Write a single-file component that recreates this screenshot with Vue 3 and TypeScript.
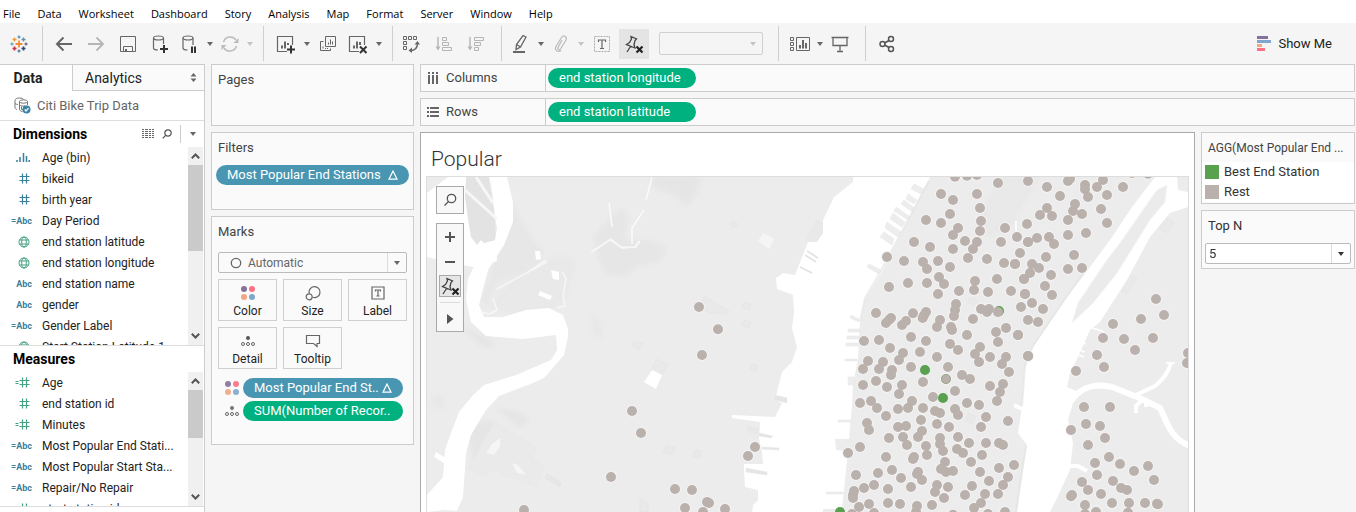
<script setup lang="ts">
import { ref } from 'vue'

type FieldKind = 'bins' | 'hash' | 'calcHash' | 'abc' | 'calcAbc' | 'globe'

interface Field {
  kind: FieldKind
  name: string
  measure?: boolean
}

interface Tile {
  x: number
  y: number
  dots: number[][]
}

const menus: string[] = ['File', 'Data', 'Worksheet', 'Dashboard', 'Story', 'Analysis', 'Map', 'Format', 'Server', 'Window', 'Help']

const dimensions: Field[] = [
  { kind: 'bins', name: 'Age (bin)' },
  { kind: 'hash', name: 'bikeid' },
  { kind: 'hash', name: 'birth year' },
  { kind: 'calcAbc', name: 'Day Period' },
  { kind: 'globe', name: 'end station latitude' },
  { kind: 'globe', name: 'end station longitude' },
  { kind: 'abc', name: 'end station name' },
  { kind: 'abc', name: 'gender' },
  { kind: 'calcAbc', name: 'Gender Label' },
  { kind: 'globe', name: 'Start Station Latitude 1' },
]

const measures: Field[] = [
  { kind: 'calcHash', name: 'Age', measure: true },
  { kind: 'hash', name: 'end station id', measure: true },
  { kind: 'calcHash', name: 'Minutes', measure: true },
  { kind: 'calcAbc', name: 'Most Popular End Stati...' },
  { kind: 'calcAbc', name: 'Most Popular Start Sta...' },
  { kind: 'calcAbc', name: 'Repair/No Repair' },
  { kind: 'hash', name: 'start station id', measure: true },
]

const panes = [
  { title: 'Dimensions', fields: dimensions, tools: true },
  { title: 'Measures', fields: measures, tools: false },
]

const markType = ref('Automatic')
const topN = ref('5')

/* Station positions, in thirds of a map unit from each tile's corner. */
const tiles: Tile[] = [
  {
    x: 416, y: 320,
    dots: [[648, 273], [675, 339], [585, 471], [324, 570]],
  },
  {
    x: 640, y: 170,
    dots: [[177, 411], [234, 478], [186, 555], [345, 831], [324, 858], [105, 957], [156, 960], [201, 996], [207, 999], [135, 1014], [189, 1026], [255, 1017], [624, 849]],
  },
  {
    x: 840, y: 170,
    dots: [
      [345, 20], [381, 17], [411, 15], [474, 39], [564, 33], [303, 72], [339, 90], [411, 72], [420, 114], [330, 132],
      [258, 150], [303, 159], [423, 153], [354, 174], [420, 183], [339, 195], [495, 174], [561, 162], [222, 216], [270, 231],
      [375, 213], [411, 216], [399, 237], [339, 237], [483, 216], [531, 201], [564, 216], [540, 249], [384, 264], [441, 267],
      [141, 261], [192, 273], [249, 276], [261, 297], [294, 273], [330, 291], [492, 279], [525, 282], [297, 321], [312, 342],
      [147, 351], [204, 339], [261, 339], [294, 372], [357, 363], [405, 333], [402, 360], [444, 366], [471, 327], [513, 363],
      [552, 327], [555, 372], [543, 411], [348, 402], [345, 420], [342, 438], [423, 417], [447, 417], [441, 426],
      [108, 429], [153, 444], [147, 450], [138, 459], [219, 430], [198, 453], [186, 465], [258, 426], [252, 436], [248, 444],
      [300, 450], [291, 471], [399, 447], [333, 471], [336, 480], [381, 495], [498, 474], [468, 486], [474, 516], [534, 495],
      [72, 513], [117, 510], [213, 501], [258, 513], [150, 534], [189, 549], [177, 570], [240, 546], [330, 522], [354, 540],
      [420, 531], [405, 552], [417, 576], [450, 561], [498, 561], [486, 582], [507, 606], [564, 558], [291, 561], [84, 573],
      [69, 597], [129, 576], [117, 597], [156, 600], [153, 615], [213, 591], [324, 591], [366, 615], [390, 627], [318, 627],
      [249, 636], [69, 645], [108, 633], [141, 651], [186, 645], [177, 672], [345, 663], [450, 648], [489, 642], [480, 666],
      [471, 693], [279, 681], [60, 699], [93, 693], [111, 714], [216, 693], [204, 714], [174, 717], [249, 714], [285, 723],
      [300, 729], [345, 717], [354, 735], [381, 699], [417, 705], [438, 741], [504, 753], [138, 738], [243, 750], [291, 762],
      [327, 771], [423, 771], [81, 759], [87, 780], [174, 771], [198, 768], [246, 783], [234, 801], [147, 804], [189, 801],
      [201, 825], [258, 828], [261, 855], [300, 804], [300, 822], [309, 843], [354, 801], [387, 819], [438, 819], [477, 819],
      [489, 825], [351, 837], [369, 849], [426, 855], [60, 831], [138, 861], [222, 861], [219, 867], [315, 876], [393, 876],
      [420, 906], [477, 894], [522, 885], [504, 921], [489, 945], [474, 972], [447, 933], [48, 915], [114, 909], [156, 900],
      [183, 924], [234, 906], [231, 912], [246, 930], [303, 897], [318, 906], [339, 903], [213, 951], [291, 945], [285, 966],
      [324, 951], [312, 984], [396, 948], [375, 975], [435, 972], [423, 999], [402, 1014], [72, 954], [102, 945], [144, 957],
      [42, 963], [39, 975], [39, 984], [57, 1011], [87, 1002], [144, 999], [180, 1002], [231, 1008], [276, 1005], [36, 1032],
      [102, 1029], [228, 1026], [339, 1034], [444, 1032], [495, 1026],
    ],
  },
  {
    x: 1010, y: 170,
    dots: [
      [174, 33], [180, 26], [279, 30], [366, 9], [414, 11], [111, 51], [225, 45], [225, 58], [234, 81], [261, 51],
      [339, 51], [150, 78], [291, 75], [195, 102], [189, 123], [216, 132], [273, 117], [111, 114], [90, 135], [126, 138],
      [174, 150], [291, 159], [228, 189], [174, 195], [81, 204], [117, 201], [132, 222], [54, 216], [192, 255], [108, 261],
      [66, 282], [87, 294], [60, 309], [42, 327], [174, 297], [216, 294], [123, 315], [105, 348], [126, 375], [66, 399],
      [99, 417], [54, 450], [84, 456], [24, 495], [54, 558], [15, 282], [45, 372], [438, 387], [462, 435], [393, 447],
      [309, 462], [279, 504], [342, 507], [429, 504], [375, 540], [261, 555], [282, 591], [198, 603], [534, 549], [531, 579],
      [222, 711], [300, 711], [228, 762], [270, 768], [183, 780], [285, 804], [234, 825], [297, 861], [255, 879], [330, 882],
      [414, 888], [372, 903], [261, 915], [432, 930], [309, 933], [216, 936], [234, 960], [333, 954], [351, 960], [273, 972],
      [186, 975], [183, 979], [225, 1005], [306, 999], [357, 999], [405, 999], [441, 1001], [444, 1003], [258, 1026], [225, 1032],
      [354, 1028],
    ],
  },
]

const bestDots: number[][] = [[925, 370], [943, 398], [840, 512]]
</script>

<template>
  <div class="app">
    <nav class="menubar" aria-label="Main menu">
      <button v-for="m in menus" :key="m" type="button">{{ m }}</button>
    </nav>

    <div class="toolbar" role="toolbar" aria-label="Tools">
      <button type="button" class="logo" aria-label="Start page">
        <svg width="18" height="18" viewBox="0 0 18 18" fill="none" stroke-width="1.4">
          <path stroke="#eb8f3a" stroke-width="1.8" d="M9 5.5v7M5.5 9h7" />
          <path stroke="#59a0b8" d="M9 .5v3M7.5 2h3" /><path stroke="#5b7ea5" d="M9 14.5v3M7.5 16h3" />
          <path stroke="#73a1b5" d="M.5 9h3M2 7.5v3" /><path stroke="#6d6c8e" d="M14.500 9h3M16 7.500v3" />
          <path stroke="#eb9a3a" d="M4.500 2.500v4M2.500 4.500h4" /><path stroke="#5d93aa" d="M13.500 2.500v4M11.500 4.500h4" />
          <path stroke="#c8304c" stroke-width="1.700" d="M4.500 11.500v4M2.500 13.500h4" /><path stroke="#29497f" stroke-width="1.700" d="M13.500 11.500v4M11.500 13.500h4" />
        </svg>
      </button>
      <span class="sep"></span>
      <button type="button" class="tool wide" aria-label="Undo">
        <svg width="18" height="18" viewBox="0 0 18 18" fill="none" stroke="#666" stroke-width="2"><path d="M17 9H2M8.500 2.500 2 9l6.500 6.500" /></svg>
      </button>
      <button type="button" class="tool wide" aria-label="Redo">
        <svg width="18" height="18" viewBox="0 0 18 18" fill="none" stroke="#b5b5b5" stroke-width="1.800"><path d="M1 9h15M9.500 2.500 16 9l-6.500 6.500" /></svg>
      </button>
      <button type="button" class="tool wide" aria-label="Save">
        <svg width="18" height="18" viewBox="0 0 18 18" fill="none" stroke="#666"><path d="M1.500 1.500h15v15h-15zM4.500 16.500v-5h9v5" /><path fill="#666" d="M6 14h2v2.500H6z" stroke="none" /></svg>
      </button>
      <button type="button" class="tool wide" aria-label="New data source">
        <svg width="20" height="20" viewBox="0 0 20 20" fill="none" stroke="#666" stroke-width="1.200"><ellipse cx="8.500" cy="4" rx="5" ry="2" /><path d="M3.500 4v10c0 1.200 2 2 4.500 2M13.500 4v6" /><path stroke="#333" stroke-width="2" d="M14 11v8M10 15h8" /></svg>
      </button>
      <button type="button" class="tool" aria-label="Pause updates">
        <svg width="20" height="20" viewBox="0 0 20 20" fill="none" stroke="#666" stroke-width="1.200"><ellipse cx="9" cy="4" rx="5" ry="2" /><path d="M4 4v10c0 1.200 2 2 4.500 2M14 4v7" /><path stroke="#333" stroke-width="2" d="M13 12.500v6.500M16 12.500v6.500" /></svg>
      </button>
      <button type="button" class="caret" aria-label="Update options"></button>
      <button type="button" class="tool narrow" aria-label="Run update">
        <svg width="18" height="18" viewBox="0 0 18 18" fill="none" stroke="#bbb" stroke-width="1.500"><path d="M2.500 7A7 7 0 0 1 15 5M15.500 11A7 7 0 0 1 3 13" /><path fill="#bbb" stroke="none" d="M17.500 3v5h-5zM.5 15v-5h5z" /></svg>
      </button>
      <button type="button" class="caret dim" aria-label="Run options"></button>
      <span class="sep"></span>
      <button type="button" class="tool gap" aria-label="New worksheet">
        <svg width="20" height="20" viewBox="0 0 20 20" fill="none" stroke="#666" stroke-width="1.200"><path d="M11 17.500H1.500v-15h15V11" /><path stroke-width="2" d="M6 14.500v-3M9 14.500v-7M12 11V9" /><path stroke="#333" stroke-width="2" d="M15 11.500v8M11 15.500h8" /></svg>
      </button>
      <button type="button" class="caret" aria-label="New sheet options"></button>
      <button type="button" class="tool" aria-label="Duplicate sheet">
        <svg width="18" height="18" viewBox="0 0 18 18" fill="none" stroke="#666"><path d="M6.500 1.500h10v10h-10zM4.500 6.500h-3v9h10v-2M9.500 9.500v-2M11.500 9.500v-5M13.500 9.500v-3M4 13.500v-2M6.500 14v-1M8.500 14v-1" /></svg>
      </button>
      <button type="button" class="tool gap" aria-label="Clear sheet">
        <svg width="20" height="20" viewBox="0 0 20 20" fill="none" stroke="#666" stroke-width="1.200"><path d="M11 17.500H1.500v-15h15V11" /><path stroke-width="2" d="M6 14.500v-3M9 14.500v-7M12 11V8" /><path stroke="#333" stroke-width="2" d="m12 12.500 6.500 6.500m0-6.500L12 19" /></svg>
      </button>
      <button type="button" class="caret" aria-label="Clear options"></button>
      <span class="sep"></span>
      <button type="button" class="tool" aria-label="Swap rows and columns">
        <svg width="18" height="18" viewBox="0 0 18 18" fill="none" stroke="#666"><path d="M1.500 1.500h3v3h-3zM6.500 1.500h3v3h-3zM11.500 1.500h3v3h-3zM1.500 6.500h3v3h-3zM1.500 11.500h3v3h-3z" /><path stroke-width="1.400" d="M15.500 8c0 5-3 7.500-7 7.500" /><path fill="#666" stroke="none" d="M12.500 9.500 15.500 6l2.500 3.500zM10 12.500v5.500L6.500 15.500z" /></svg>
      </button>
      <button type="button" class="tool wide gap" aria-label="Sort ascending">
        <svg width="18" height="18" viewBox="0 0 18 18" fill="none" stroke="#b5b5b5"><path stroke-width="1.400" d="M3 2v12" /><path fill="#b5b5b5" stroke="none" d="M.5 11.500h5L3 15.500z" /><path d="M7.500 2.500h4v3h-4zM7.500 7.500h6v3h-6zM7.500 12.500h9v3h-9z" /></svg>
      </button>
      <button type="button" class="tool wide" aria-label="Sort descending">
        <svg width="18" height="18" viewBox="0 0 18 18" fill="none" stroke="#b5b5b5"><path stroke-width="1.400" d="M3 2v12" /><path fill="#b5b5b5" stroke="none" d="M.5 11.500h5L3 15.500z" /><path d="M7.500 2.500h9v3h-9zM7.500 7.500h6v3h-6zM7.500 12.500h4v3h-4z" /></svg>
      </button>
      <span class="sep gap"></span>
      <button type="button" class="tool" aria-label="Highlight">
        <svg width="18" height="20" viewBox="0 0 18 20" fill="none" stroke="#666" stroke-width="1.300"><path d="M12 1.500 15 3 9.500 13 5 15.500l.5-5zM5.500 10.500 9.500 13" /><path stroke-width="2" d="M2 18h12" /></svg>
      </button>
      <button type="button" class="caret" aria-label="Highlight options"></button>
      <button type="button" class="tool narrow" aria-label="Group members">
        <svg width="18" height="20" viewBox="0 0 18 20" fill="none" stroke="#bbb" stroke-width="1.200"><path d="m10 6-4 7.500c-.8 2 1.500 3 2.500 1.500L14 6c1.500-3.500-2.500-5.500-4.500-2.500l-5.500 9c-2 4 2.500 6 5 4" /></svg>
      </button>
      <button type="button" class="caret dim" aria-label="Group options"></button>
      <button type="button" class="tool" aria-label="Show mark labels">
        <svg width="18" height="18" viewBox="0 0 18 18" fill="none" stroke="#aaa"><rect x="1.500" y="1.500" width="15" height="15" stroke-dasharray="2 1" /><path stroke="#666" stroke-width="1.200" d="M5.500 7V5h7v2M9 5v8M7 13.500h4" /></svg>
      </button>
      <button type="button" class="tool pin gap" aria-label="Fix axes">
        <svg width="20" height="20" viewBox="0 0 20 20" fill="none" stroke="#444" stroke-width="1.300"><path d="M7 2.500 12.500 5 11 6.500l-1 4 1 3.500-8.500-3.500 3-2 2-3.500zM6.500 12.500 3 18" /><path stroke="#222" stroke-width="2.200" d="m12.500 12.500 6 6m0-6-6 6" /></svg>
      </button>
      <span class="fit">
        <select aria-label="Fit" disabled></select>
      </span>
      <span class="sep"></span>
      <button type="button" class="tool narrow gap" aria-label="Show cards">
        <svg width="20" height="18" viewBox="0 0 20 18" fill="none" stroke="#666"><path d="M.5 2.500h3v3h-3zM.5 7.500h3v3h-3zM.5 12.500h3v3h-3zM6.500 2.500h13v13h-13z" /><path stroke-width="2" d="M10 13.500V10M13 13.500V5M16 13.500V8" /></svg>
      </button>
      <button type="button" class="caret" aria-label="Card options"></button>
      <button type="button" class="tool narrow" aria-label="Presentation mode">
        <svg width="18" height="18" viewBox="0 0 18 18" fill="none" stroke="#666" stroke-width="1.300"><path d="M.5 2.500h17M2 3v7.500h14V3M9 10.500V16M6 16.500h6" /></svg>
      </button>
      <span class="sep gap2"></span>
      <button type="button" class="tool wide" aria-label="Share">
        <svg width="18" height="18" viewBox="0 0 18 18" fill="none" stroke="#555" stroke-width="1.500"><circle cx="4.500" cy="9" r="2.500" /><circle cx="13" cy="4" r="2.500" /><circle cx="13" cy="14" r="2.500" /><path d="m6.500 8 4.500-2.500M6.500 10l4.500 2.500" /></svg>
      </button>
      <button type="button" class="showme">
        <svg width="14" height="15" viewBox="0 0 14 15"><path fill="#85719a" d="M0 0h11v3H0z" /><path fill="#7fa6cd" d="M0 4h14v3H0z" /><path fill="#f3a683" d="M0 8h5v3H0z" /><path fill="#fc7183" d="M0 12h8v3H0z" /></svg>
        Show Me
      </button>
    </div>

    <div class="workspace">
      <aside class="data">
        <div class="tabs">
          <button type="button" class="tab active">Data</button>
          <button type="button" class="tab rest">
            Analytics
            <svg width="7" height="9" viewBox="0 0 7 9" fill="#666"><path d="M3.500 0 6.500 3.500h-6zM3.500 9 .5 5.500h6z" /></svg>
          </button>
        </div>
        <button type="button" class="source">
          <svg width="17" height="17" viewBox="0 0 17 17" fill="none" stroke="#777"><path d="M1 3.500C1 2 3 1 5.500 1S9 1.500 9.500 2.500M1 3.500v7c0 1 .8 1.500 2 2M1 6.500c1 .7 2 1 3 1" /><ellipse cx="9.500" cy="4.500" rx="4" ry="1.700" /><path d="M5.500 4.500v8c0 1 1 1.700 3 2M13.500 4.500V8M5.500 8c1 1 4 1.500 6 .7M7.500 9.500v3h3" /><circle cx="12.500" cy="12.500" r="4" fill="#3b83a8" stroke="none" /><path stroke="#fff" stroke-width="1.200" d="m10.700 12.500 1.300 1.500 2.500-2.800" /></svg>
          Citi Bike Trip Data
        </button>

        <section v-for="p in panes" :key="p.title" class="pane" :class="{ main: p.tools }">
          <header>
            <h2>{{ p.title }}</h2>
            <template v-if="p.tools">
              <button type="button" class="mini" aria-label="View as list">
                <svg width="12" height="10" viewBox="0 0 12 10" stroke="#666"><path stroke-dasharray="2 1 3 1 2 1 2 1" d="M0 .5h12M0 2.500h12M0 4.500h12M0 6.500h12M0 8.500h12" /></svg>
              </button>
              <button type="button" class="mini" aria-label="Find field">
                <svg width="10" height="10" viewBox="0 0 10 10" fill="none" stroke="#555" stroke-width="1.200"><circle cx="6" cy="4" r="3.200" /><path d="M3.700 6.300.7 9.300" /></svg>
              </button>
              <span class="rule"></span>
              <button type="button" class="caret head" aria-label="Pane menu"></button>
            </template>
          </header>
          <div class="listwrap">
            <ul>
              <li v-for="f in p.fields" :key="f.name" :class="{ green: f.measure || f.kind === 'globe' }">
                <span class="kind">
                  <svg v-if="f.kind === 'bins'" width="14" height="11" viewBox="0 0 14 11" stroke="currentColor"><path stroke-width="1.500" d="M1 10V8M4 10V5M7.500 10V1M10.500 10V4M13.200 10V8" /></svg>
                  <svg v-else-if="f.kind === 'hash'" width="11" height="11" viewBox="0 0 11 11" stroke="currentColor" stroke-width="1.200"><path d="M3.500.5v10M7.500.5v10M.5 3.500h10M.5 7.500h10" /></svg>
                  <svg v-else-if="f.kind === 'calcHash'" width="15" height="11" viewBox="0 0 15 11" stroke="currentColor" stroke-width="1.200"><path d="M7.500.5v10M11.500.5v10M4.500 3.500h10M4.500 7.500h10M.5 4.500h3M.5 6.500h3" /></svg>
                  <svg v-else-if="f.kind === 'globe'" width="12" height="12" viewBox="0 0 12 12" fill="none" stroke="currentColor"><circle cx="6" cy="6" r="5" /><ellipse cx="6" cy="6" rx="2.300" ry="5" /><path d="M1.500 4h9M1.500 8h9" /></svg>
                  <b v-else>{{ f.kind === 'calcAbc' ? '=Abc' : 'Abc' }}</b>
                </span>
                <span>{{ f.name }}</span>
              </li>
            </ul>
            <div class="scroll">
              <svg width="9" height="6" viewBox="0 0 9 6" fill="none" stroke="#555" stroke-width="2"><path d="m.8 5.200 3.700-3.700 3.700 3.700" /></svg>
              <span class="thumb"></span>
              <svg width="9" height="6" viewBox="0 0 9 6" fill="none" stroke="#555" stroke-width="2"><path d="m.8.8 3.700 3.700L8.200.8" /></svg>
            </div>
          </div>
        </section>
      </aside>

      <div class="cards">
        <section class="card pages"><h3>Pages</h3></section>
        <section class="card filters">
          <h3>Filters</h3>
          <button type="button" class="pill blue">
            <span>Most Popular End Stations</span>
            <svg width="10" height="10" viewBox="0 0 10 10" fill="none" stroke="#fff" stroke-width="1.200"><path d="M5 1 9 9.200H1z" /></svg>
          </button>
        </section>
        <section class="card marks">
          <h3>Marks</h3>
          <div class="combo">
            <svg width="12" height="12" viewBox="0 0 12 12" fill="none" stroke="#666" stroke-width="1.300"><circle cx="6" cy="6" r="4.700" /></svg>
            <select v-model="markType" aria-label="Mark type"><option>Automatic</option></select>
            <span class="drop"></span>
          </div>
          <div class="shelves">
            <button type="button">
              <svg width="16" height="16" viewBox="0 0 16 16"><circle cx="4" cy="4" r="3" fill="#85719a" /><circle cx="12" cy="4" r="3" fill="#fc7183" /><circle cx="4" cy="12" r="3" fill="#f3a683" /><circle cx="12" cy="12" r="3" fill="#7fa6cd" /></svg>
              Color
            </button>
            <button type="button">
              <svg width="16" height="16" viewBox="0 0 16 16" fill="none" stroke="#666" stroke-width="1.200"><path d="M4.200 8.500a5.500 5.500 0 1 1 3.500 3.800" /><circle cx="4.200" cy="11.800" r="3" /></svg>
              Size
            </button>
            <button type="button">
              <svg width="16" height="16" viewBox="0 0 16 16" fill="none" stroke="#666" stroke-width="1.200"><path d="M2 2h12v12H2zM5.500 6.500V5h5v1.500M8 5v6M6.500 11h3" /></svg>
              Label
            </button>
            <button type="button">
              <svg width="16" height="16" viewBox="0 0 16 16" fill="none" stroke="#666"><circle cx="8" cy="5" r="2" fill="#555" stroke="none" /><circle cx="3" cy="11" r="1.500" /><circle cx="8" cy="11" r="1.500" /><circle cx="13" cy="11" r="1.500" /></svg>
              Detail
            </button>
            <button type="button">
              <svg width="16" height="16" viewBox="0 0 16 16" fill="none" stroke="#666" stroke-width="1.200"><path d="M1.500 2.500h13v8H12v3l-3.500-3h-7z" /></svg>
              Tooltip
            </button>
          </div>
          <div class="encodings">
            <div class="enc">
              <svg width="16" height="16" viewBox="0 0 16 16" opacity=".9"><circle cx="4" cy="4" r="3" fill="#85719a" /><circle cx="12" cy="4" r="3" fill="#fc7183" /><circle cx="4" cy="12" r="3" fill="#f3a683" /><circle cx="12" cy="12" r="3" fill="#7fa6cd" /></svg>
              <button type="button" class="pill blue">
                <span>Most Popular End St..</span>
                <svg width="10" height="10" viewBox="0 0 10 10" fill="none" stroke="#fff" stroke-width="1.200"><path d="M5 1 9 9.200H1z" /></svg>
              </button>
            </div>
            <div class="enc">
              <svg width="16" height="16" viewBox="0 0 16 16" fill="none" stroke="#666"><circle cx="8" cy="5" r="2" fill="#777" stroke="none" /><circle cx="3" cy="11" r="1.500" /><circle cx="8" cy="11" r="1.500" /><circle cx="13" cy="11" r="1.500" /></svg>
              <button type="button" class="pill"><span>SUM(Number of Recor..</span></button>
            </div>
          </div>
        </section>
      </div>

      <main class="canvas">
        <div class="shelf">
          <div class="label">
            <svg width="12" height="12" viewBox="0 0 12 12" stroke="#666" stroke-width="2"><path d="M2 0v2M6 0v2M10 0v2M2 3v9M6 3v9M10 3v9" /></svg>
            Columns
          </div>
          <button type="button" class="pill">end station longitude</button>
        </div>
        <div class="shelf">
          <div class="label">
            <svg width="12" height="12" viewBox="0 0 12 12" stroke="#666" stroke-width="2"><path d="M0 2h2M0 6h2M0 10h2M3 2h9M3 6h9M3 10h9" /></svg>
            Rows
          </div>
          <button type="button" class="pill">end station latitude</button>
        </div>

        <div class="lower">
          <section class="view">
            <h1>Popular</h1>
            <div class="map">
              <svg class="geo" viewBox="427 177 762 335" preserveAspectRatio="xMinYMin slice" role="img" aria-label="Map of end stations">
                <defs>
                  <filter id="soft" x="-20%" y="-20%" width="140%" height="140%"><feGaussianBlur stdDeviation="2" /></filter>
                </defs>
                <rect x="427" y="177" width="762" height="335" fill="#ececec" />
                <g fill="#e5e5e5" filter="url(#soft)">
                  <path d="M650 177h52l-6 18-9 11-14-12-18-6z" />
                  <path d="M612 216l12-8 4 14-4 18 28 0 14 8-6 14-22 4-12 10-20-2-8-18-4-20z" opacity=".8" />
                  <path d="M510 200l22 38 12 14-8 12-40 20-10 24-4-10 16-50z" opacity=".6" />
                  <path d="M520 270l40-14 16 6-10 34-12 14-40 4-24-8z" opacity=".5" />
                  <path d="M470 424l24-4 6 20-6 18-20 6-4-20zM494 408l24 4 12 6-8 10z" />
                  <path d="M592 314l8 6 2 18-8-2zM432 396l12 0 0 12-10-2z" opacity=".7" />
                  <path d="M1000 177h40l-30 50-22 10-8-20z" opacity=".5" />
                  <path d="M460 325l30 14 6 8-14 0z" />
                </g>
                <g fill="#e9e9e9" stroke="#e2e2e2" stroke-width=".6">
                  <path d="M494 422l42 25-4 12 12 8-8 20-18-8-18-4-2-8-12 8-18-6z" fill="#eaeaea" stroke="#e6e6e6" />
                  <path d="M704 296l25 15-4 4-10-3-3 2-11-6zM744 302l7 2-2 6-7-2zM744 320l7 2-2 6-7-3zM657 359l11 6-7 11-10-6zM732 221l6 3-4 4-5-4zM666 446l9 1-3 8-9-2zM694 450l7 1-1 7-7-1zM752 364l6 2-2 5-6-2zM748 427l12 2-2 4-10-1z" />
                  <path d="M817 220l6 3-1 12-5 8-10-4zM633 342l11 1-5 7-6-4zM970 297l8 3-4 5-7-3zM968 413l8 3-4 8-6-4zM1126 272l11 7-11 15-8-6zM1162 216l12 6-6 11-9-4zM640 499l8 4 0 9h-8z" />
                  <path d="M547 474l14 8-1 5-15-9z" fill="#e4e7e5" />
                </g>
                <g fill="#fff">
                  <path d="M448 177h43l4 60 2 24-20 7-50-11v-64z" />
                  <path fill="#e3e3e3" d="M466 177h23l5 28 2 35-12 3-3-3-4 5-6-8-3-18-3-22z" />
                  <path d="M491 177h16l6 25v20l-9 23-16 25-5 19-4 16 5 12 19 0 23-7 23-2 14 7 5 14v8l-4 18-20 23-11 5-34 13-13 14-15 25-5 18-3 44-6 14-13-1-17 2v-17l16-18 2-27 6-17 8-21 14-17 11-10 32-10 35-15 6-10-1-15-33 4-37-3-15-14-5-22 2-21 8-17 18-17 3-16-4-27z" />
                  <path d="M436 452l10 6-2 5-10-6zM535 251l5 0 1 8-5 1zM540 291l12 5-2 4-12-5zM551 270l8 2 0 8-6-1z" />
                  <path d="M652 370l10 5-6 14-12-7z" />
                  <path fill="#f3f6f5" d="M763 233l11 6-5 10-11-8zM492 444l8-6 0 8-6 9-8-2zM512 463l6 2 8 10-9-2z" />
                </g>
                <g fill="none" stroke="#fff" stroke-width="1.500">
                  <path stroke="#f7f7f7" stroke-width="3" d="M476 177l17 26M464 189l33 30" />
                  <path d="M652 177l-6 23M644 210l-12 18 0 16M609 203l3 24M592 252l18-12 12 8 14-1 4-6M528 272l18-12" stroke-opacity=".8" />
                  <path stroke="#f5f5f5" d="M591 252l20-13 10 8 14 0 4-6M497 289l50-27" />
                  <path stroke="#f7f7f7" d="M562 272l4 6-3 18 2 10-8 2M481 312l8 2 8-4-4-12" />
                </g>
                <path fill="#fff" d="M930 177h-77v5l-19 15-11 23v13l-6 9-9 0-13 33-12-2-7 5 1 11 16 6 1 18-2 15 5 19-5 15-10 10-7 28 7 3-7 14-43-2v3l28 4-1 17 3 13 1 12h-19v6l1 17 13 3v10l-5 5-1 9h71v-5l19 0 6-58-12-1-1-11 14 0 3-34 1-20 5-26 2-37 5-23 15-24z" />
                <g fill="#ededed" stroke="#e6e6e6" stroke-width=".5">
                  <path d="M807 251l11 7M805 255l11 7M800 267l12 6" stroke-width="1.500" stroke="#e2e2e2" />
                  <path d="M775 395l12 3 0 5-12-3zM746 468l21 4 0 3-21-3zM759 433l14 3-2 2-12-2zM762 447l17 1 0 2-17-1z" fill="#e4e6e6" />
                  <path d="M914 184l10 5-3 5-10-5zM908 194l9 6-3 4-8-5zM904 200l12 9-2 4-13-9zM896 207l14 10-2 3-14-9zM893 213l12 9-3 5-12-8zM887 222l14 10-3 5-13-9zM884 232l10 7-2 6-12-8zM869 264l12 6-2 4-12-7z" />
                  <path d="M851 315l8 4v3l-9-4zM848 329h12v3h-12zM847 336h12v3h-12zM846 343h13v3h-13zM845 359h12v2h-12zM848 377h6v8h-6zM838 420h13v2h-13zM826 492h17v2h-17z" />
                </g>
                <path fill="#fff" d="M1155 177l-23 30-22 33-20 27-23 30-34 50-8 20-3 40-4 26 9 12-4 25-6 42h33l7-14 13-28 3-27-5-23 5-17 8-10-14-6 3-14 8-16 12-27 10-8 27-42 23-43 20-24 18-6v-15l-10-2-1-13z" />
                <path fill="#ebebeb" stroke="#f5f5f5" d="M1167 185l-10 5-37 53-13 17-29 43-6 20 21-20 24-30 33-53 15-18z" />
                <g fill="none" stroke="#fff">
                  <path stroke-width="6" d="M1070 402C1082 384 1100 384 1112 387L1142 399 1160 408C1168 424 1170 438 1190 446" />
                  <path stroke-width="4" d="M1136 395L1155 386Q1168 376 1171 362M1144 398l-8 8v7M1146 400l0 7" />
                  <path stroke-width="4" d="M1070 466l8 0 9 5M1014 405l8 4" />
                  <path stroke-width="1.500" d="M1080 350l5 2M1078 355l6 2M1082 342l4 2M1092 328l10 3 4 3M1166 363h9M1016 221v10" />
                </g>
                <path fill="none" stroke="#e2e2e2" stroke-width="2" opacity=".6" d="M1087 268l-20 28-34 50-8 20-3 40M1026 446l-4 25-6 41M929 181l-50 93-14 24-5 23" />
                <g fill="#f5f5f5" opacity=".8">
                  <g v-for="t in tiles" :key="`halo${t.x}`">
                    <circle v-for="(d, i) in t.dots" :key="i" :cx="t.x + d[0] / 3" :cy="t.y + d[1] / 3" r="6" />
                  </g>
                </g>
                <circle cx="999" cy="311" r="5" fill="#59a14f" />
                <circle cx="998" cy="312" r="5" fill="#bab0ac" />
                <g fill="#bab0ac">
                  <g v-for="t in tiles" :key="t.x">
                    <circle v-for="(d, i) in t.dots" :key="i" :cx="t.x + d[0] / 3" :cy="t.y + d[1] / 3" r="5" />
                  </g>
                </g>
                <circle cx="946" cy="379" r="4.500" fill="none" stroke="#9aaa8e" />
                <circle v-for="(d, i) in bestDots" :key="i" :cx="d[0]" :cy="d[1]" r="5" fill="#59a14f" />
              </svg>
              <div class="mapbar">
                <button type="button" class="search" aria-label="Search map">
                  <svg width="14" height="14" viewBox="0 0 14 14" fill="none" stroke="#555" stroke-width="1.300"><circle cx="8.500" cy="5.500" r="4.200" /><path d="M5.500 8.500 1.500 12.500" /></svg>
                </button>
                <div class="zoomer">
                  <button type="button" aria-label="Zoom in"><svg width="12" height="12" viewBox="0 0 12 12" stroke="#555" stroke-width="2"><path d="M6 1v10M1 6h10" /></svg></button>
                  <button type="button" aria-label="Zoom out"><svg width="12" height="12" viewBox="0 0 12 12" stroke="#555" stroke-width="2"><path d="M1 6h10" /></svg></button>
                  <button type="button" class="on" aria-label="Reset axes">
                    <svg width="20" height="20" viewBox="0 0 20 20" fill="none" stroke="#444" stroke-width="1.300"><path d="M7 2.500 12.500 5 11 6.500l-1 4 1 3.500-8.500-3.500 3-2 2-3.500zM6.500 12.500 3 18" /><path stroke="#222" stroke-width="2.200" d="m12.500 12.500 6 6m0-6-6 6" /></svg>
                  </button>
                  <hr>
                  <button type="button" aria-label="More tools"><svg width="7" height="10" viewBox="0 0 7 10" fill="#555"><path d="M0 0l6.500 5L0 10z" /></svg></button>
                </div>
              </div>
            </div>
          </section>

          <div class="side">
            <section class="card legend">
              <h3>AGG(Most Popular End ...</h3>
              <ul>
                <li><i class="best"></i>Best End Station</li>
                <li><i></i>Rest</li>
              </ul>
            </section>
            <section class="card param">
              <label for="topn">Top N</label>
              <div class="combo">
                <select id="topn" v-model="topN"><option>5</option><option>10</option></select>
                <span class="drop"></span>
              </div>
            </section>
          </div>
        </div>
      </main>
    </div>
  </div>
</template>

<style>
body {
  margin: 0;
}
</style>

<style scoped>
.app {
  display: flex;
  flex-direction: column;
  height: 100vh;
  overflow: hidden;
  background: #f5f5f5;
  color: #333;
  font: 13px/20px Roboto, "Liberation Sans", sans-serif;
}
.app * {
  box-sizing: border-box;
}
button,
select {
  margin: 0;
  padding: 0;
  border: 0;
  background: none;
  color: inherit;
  font: inherit;
}
select {
  appearance: none;
  outline: 0;
}
h1,
h2,
h3,
ul {
  margin: 0;
  padding: 0;
  list-style: none;
  font-weight: 400;
}
svg {
  flex: none;
  display: block;
}

.menubar {
  display: flex;
  flex: none;
  gap: 17px;
  height: 23px;
  padding: 4px 3px 0;
  background: #fff;
  color: #000;
  font: 11px/20px "Open Sans", "Noto Sans", sans-serif;
}

.toolbar {
  display: flex;
  flex: none;
  align-items: center;
  height: 41px;
}
.toolbar button {
  display: flex;
  flex: none;
  align-items: center;
  justify-content: center;
  height: 30px;
}
.toolbar .logo {
  width: 37px;
}
.toolbar .tool {
  width: 26px;
}
.toolbar .wide {
  width: 32px;
}
.toolbar .narrow {
  width: 24px;
}
.toolbar .gap {
  margin-left: 4px;
}
.toolbar .pin {
  width: 30px;
  background: #e4e4e4;
}
.sep {
  flex: none;
  width: 1px;
  height: 35px;
  margin: 0 5px;
  background: #cfcfcf;
}
.toolbar .sep.gap {
  margin-left: 9px;
}
.toolbar .sep.gap2 {
  margin-left: 13px;
}
.caret {
  width: 16px;
}
.caret::before,
.drop::before,
.fit::after {
  content: "";
  border: solid transparent;
  border-width: 4px 3px 0;
  border-top-color: #666;
}
.caret.dim::before,
.fit::after {
  border-top-color: #c4c4c4;
}
.fit {
  display: flex;
  align-items: center;
  width: 104px;
  height: 23px;
  margin: 0 10px;
  padding-right: 6px;
  border: 1px solid #d0d0d0;
  border-radius: 2px;
}
.fit select {
  flex: 1;
  min-width: 0;
}
.toolbar .showme {
  gap: 7px;
  margin-left: auto;
  margin-right: 24px;
  color: #222;
  font-size: 13px;
}

.workspace {
  display: flex;
  flex: 1;
  gap: 6px;
  min-height: 0;
  padding-right: 1px;
}
.data {
  display: flex;
  flex: none;
  flex-direction: column;
  width: 205px;
  padding-bottom: 5px;
  border: solid #ccc;
  border-width: 1px 1px 0 0;
  background: #fff;
  color: #222;
}
.tabs {
  display: flex;
  flex: none;
  height: 26px;
  font-size: 14px;
}
.tab.active {
  width: 72px;
  padding-right: 16px;
  font-weight: 700;
}
.tab.rest {
  display: flex;
  flex: 1;
  align-items: center;
  justify-content: space-between;
  padding: 0 7px 0 12px;
  border: solid #ccc;
  border-width: 0 0 1px 1px;
  background: #fafafa;
}
.source {
  display: flex;
  flex: none;
  align-items: center;
  gap: 6px;
  height: 30px;
  padding: 0 14px;
  border-bottom: 1px solid #ddd;
  color: #666;
}
.pane {
  display: flex;
  flex: 5 1 0;
  flex-direction: column;
  min-height: 0;
  border-bottom: 1px solid #ddd;
}
.pane.main {
  flex-grow: 7;
}
.pane header {
  display: flex;
  flex: none;
  align-items: center;
  height: 26px;
  padding-left: 13px;
}
h2 {
  flex: 1;
  color: #000;
  font-size: 14px;
  font-weight: 700;
}
.mini {
  margin-right: 8px;
}
.rule {
  width: 1px;
  height: 18px;
  background: #ccc;
}
.caret.head {
  display: flex;
  justify-content: center;
  width: 23px;
}
.listwrap {
  display: flex;
  flex: 1;
  min-height: 0;
  overflow: hidden;
}
.listwrap ul {
  flex: 1;
  min-width: 0;
}
.listwrap li {
  display: flex;
  align-items: center;
  height: 21px;
  white-space: nowrap;
  color: #3b7f9c;
  font-size: 12px;
}
.listwrap li.green {
  color: #45a381;
}
.listwrap li > span:last-child {
  color: #222;
}
.kind {
  display: flex;
  flex: none;
  justify-content: flex-end;
  width: 32px;
  margin-right: 10px;
}
.kind svg {
  margin-right: 2px;
}
.kind b {
  font-size: 9px;
}
.scroll {
  display: flex;
  flex: none;
  flex-direction: column;
  align-items: center;
  justify-content: space-between;
  width: 15px;
  margin-right: 1px;
  padding: 6px 0;
  background: #f0f0f0;
}
.thumb {
  width: 15px;
  height: 48px;
  margin: 6px 0 auto;
  background: #cacaca;
}
.main .thumb {
  height: 86px;
}

.cards {
  display: flex;
  flex: none;
  flex-direction: column;
  gap: 6px;
  width: 203px;
}
.card {
  flex: none;
  border: 1px solid #ccc;
  background: #fafafa;
}
.card h3 {
  padding: 5px 6px 0;
  color: #444;
  font-size: 13px;
}
.pages {
  height: 62px;
}
.filters {
  height: 78px;
}
.marks {
  padding-bottom: 23px;
}
.pill {
  display: flex;
  align-items: center;
  justify-content: space-between;
  height: 20px;
  padding: 0 11px;
  border-radius: 10px;
  background: #00b180;
  color: #fff;
  white-space: nowrap;
}
.pill.blue {
  background: #4996b2;
}
.filters .pill {
  width: 193px;
  margin: 7px 4px 0;
}
.combo {
  position: relative;
  display: flex;
  align-items: center;
  height: 21px;
  border: 1px solid #bbb;
  border-radius: 2px;
  background: #fff;
}
.combo select {
  flex: 1;
  min-width: 0;
  height: 19px;
}
.drop {
  position: absolute;
  top: 0;
  right: 0;
  bottom: 0;
  display: flex;
  align-items: center;
  justify-content: center;
  width: 19px;
  border-left: 1px solid #ddd;
  pointer-events: none;
}
.marks .combo {
  margin: 10px 6px 0;
  padding-left: 11px;
  gap: 6px;
  background: #fafafa;
  color: #666;
  font-size: 12px;
}
.shelves {
  display: grid;
  grid-template-columns: repeat(3, 1fr);
  gap: 6px;
  padding: 6px 6px 0;
}
.shelves button {
  display: flex;
  flex-direction: column;
  align-items: center;
  height: 42px;
  padding-top: 5px;
  border: 1px solid #d0d0d0;
  color: #222;
  font-size: 12px;
  line-height: 20px;
}
.encodings {
  display: grid;
  gap: 3px;
  padding: 9px 10px 0 12px;
}
.enc {
  display: flex;
  align-items: center;
  gap: 3px;
}
.enc .pill {
  flex: 1;
}

.canvas {
  display: flex;
  flex: 1;
  flex-direction: column;
  gap: 6px;
  min-width: 0;
}
.shelf {
  display: flex;
  flex: none;
  align-items: center;
  height: 28px;
  border: 1px solid #ccc;
  background: #fafafa;
}
.shelf .label {
  display: flex;
  align-items: center;
  gap: 7px;
  width: 125px;
  height: 26px;
  padding-left: 6px;
  border-right: 1px solid #ccc;
  color: #444;
}
.shelf .pill {
  width: 148px;
  margin-left: 2px;
}
.lower {
  display: flex;
  flex: 1;
  gap: 6px;
  min-height: 0;
}
.view {
  display: flex;
  flex: 1;
  flex-direction: column;
  min-width: 0;
  padding: 0 5px;
  border: solid #aaa;
  border-width: 1px 1px 0;
  background: #fff;
}
h1 {
  padding: 12px 5px 3px;
  color: #333;
  font-size: 21px;
  font-weight: 300;
  line-height: 28px;
}
.map {
  position: relative;
  flex: 1;
  min-height: 0;
  border: solid #ddd;
  border-width: 1px 1px 0;
  overflow: hidden;
}
.geo {
  width: 100%;
  height: 100%;
}
.mapbar {
  position: absolute;
  top: 9px;
  left: 9px;
  display: grid;
  gap: 9px;
  width: 28px;
}
.mapbar button {
  display: grid;
  place-items: center;
  width: 26px;
  height: 25px;
}
.search,
.zoomer {
  border: 1px solid #aaa;
  background: #f8f8f8;
}
.mapbar .search {
  width: 28px;
  height: 28px;
}
.mapbar .on {
  width: 22px;
  height: 22px;
  margin: 1px 2px 0;
  border: 1px solid #aaa;
  background: #e6e6e6;
}
.zoomer hr {
  height: 1px;
  margin: 5px 3px 3px;
  border: 0;
  background: #ddd;
}

.side {
  display: flex;
  flex: none;
  flex-direction: column;
  gap: 6px;
  width: 154px;
}
.legend h3 {
  padding-bottom: 4px;
  font-size: 12px;
  white-space: nowrap;
}
.legend ul {
  background: #fff;
}
.legend li {
  display: flex;
  align-items: center;
  gap: 5px;
  height: 20px;
  padding-left: 3px;
}
.legend li:last-child {
  margin-bottom: 1px;
}
.legend i {
  width: 14px;
  height: 14px;
  background: #bab0ac;
}
.legend .best {
  background: #59a14f;
}
.param label {
  display: block;
  padding: 5px 6px 7px;
}
.param .combo {
  margin: 0 3px 4px;
  padding-left: 3px;
}
.param .drop::before {
  border-top-color: #333;
}
</style>
